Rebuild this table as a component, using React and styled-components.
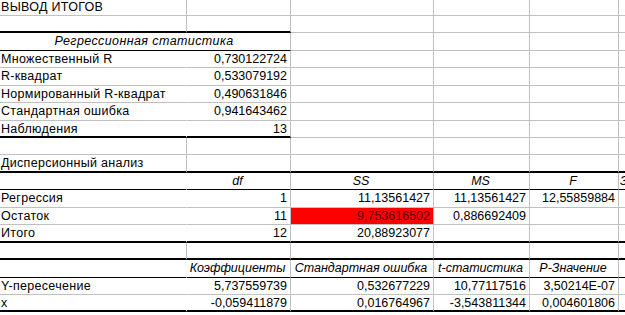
import React from 'react';
import styled, { createGlobalStyle } from 'styled-components';

const GRID = '#c0c0c0';
const COLS = [187, 104, 143, 96, 89, 84];

const edges = {
	grid: `1px solid ${GRID}`,
	thin: '1px solid #000',
	thick: '2px solid #000',
};

const GlobalStyle = createGlobalStyle`
	html, body {
		margin: 0;
		padding: 0;
		background: #fff;
		overflow: hidden;
	}
`

const Sheet = styled.div`
	width: 625px;
	height: 315px;
	overflow: hidden;
	font-family: "Liberation Sans", Arial, sans-serif;
	font-size: 12.5px;
	color: #000;
	.rows {
		margin-top: -1.5px;
		width: max-content;
	}
`

const Row = styled.div`
	display: flex;
	height: 17.45px;
`

const Cell = styled.div`
	flex: none;
	box-sizing: border-box;
	width: ${p => p.$w}px;
	height: 100%;
	padding: 0 3px 0 1px;
	line-height: 16px;
	white-space: nowrap;
	overflow: visible;
	text-align: ${p => p.$align};
	font-style: ${p => (p.$italic ? 'italic' : 'normal')};
	letter-spacing: ${p => p.$spacing || 0}px;
	background: ${p => (p.$red ? '#ff0000' : 'transparent')};
	color: ${p => (p.$red ? '#5a0000' : '#000')};
	border-right: 1px solid ${p => (p.$open ? 'transparent' : GRID)};
	border-bottom: ${p => edges[p.$edge]};
`

const rows = [
	{ cells: ['ВЫВОД ИТОГОВ'] },
	{ cells: [], edge: 'thick', span: 2 },
	{ title: 'Регрессионная статистика', edge: 'thin', span: 2 },
	{ cells: ['Множественный R', '0,730122724'], open: true },
	{ cells: ['R-квадрат', '0,533079192'], open: true },
	{ cells: ['Нормированный R-квадрат', '0,490631846'], open: true },
	{ cells: ['Стандартная ошибка', '0,941643462'], open: true },
	{ cells: ['Наблюдения', '13'], open: true, edge: 'thick', span: 2 },
	{ cells: [] },
	{ cells: ['Дисперсионный анализ'], edge: 'thick', span: 6 },
	{ cells: ['', 'df', 'SS', 'MS', 'F', 'Значимость F'], head: true, open: true, edge: 'thin', span: 6 },
	{ cells: ['Регрессия', '1', '11,13561427', '11,13561427', '12,55859884'], open: true },
	{ cells: ['Остаток', '11', '9,753616502', '0,886692409'], open: true, red: 2 },
	{ cells: ['Итого', '12', '20,88923077'], open: true, edge: 'thick', span: 6 },
	{ cells: [], edge: 'thick', span: 6 },
	{ cells: ['', 'Коэффициенты', 'Стандартная ошибка', 't-статистика', 'P-Значение'], head: true, open: true, edge: 'thin', span: 6 },
	{ cells: ['Y-пересечение', '5,737559739', '0,532677229', '10,77117516', '3,50214E-07'], open: true },
	{ cells: ['x', '-0,059411879', '0,016764967', '-3,543811344', '0,004601806'], open: true, edge: 'thick', span: 6 },
];

const edgeOf = (row, i) => (row.edge && i < row.span ? row.edge : 'grid');

const SheetRow = ({ row }) => {
	if (row.title) {
		return (
			<Row>
				<Cell $w={COLS[0] + COLS[1]} $align="center" $italic $spacing={0.4} $edge={row.edge}>{row.title}</Cell>
				{COLS.slice(2).map((w, i) => <Cell key={i} $w={w} $edge="grid" />)}
			</Row>
		);
	}
	return (
		<Row>
			{COLS.map((w, i) => (
				<Cell
					key={i}
					$w={w}
					$align={i === 0 ? 'left' : row.head ? 'center' : 'right'}
					$italic={row.head}
					$spacing={i === 0 ? 0.3 : 0}
					$open={row.open && i === 0}
					$red={row.red === i}
					$edge={edgeOf(row, i)}
				>
					{row.cells[i] || ''}
				</Cell>
			))}
		</Row>
	);
}

const App = () => {
	return (
		<Sheet>
			<GlobalStyle />
			<div className="rows">
				{rows.map((row, i) => <SheetRow key={i} row={row} />)}
			</div>
		</Sheet>
	);
}

export default App;
